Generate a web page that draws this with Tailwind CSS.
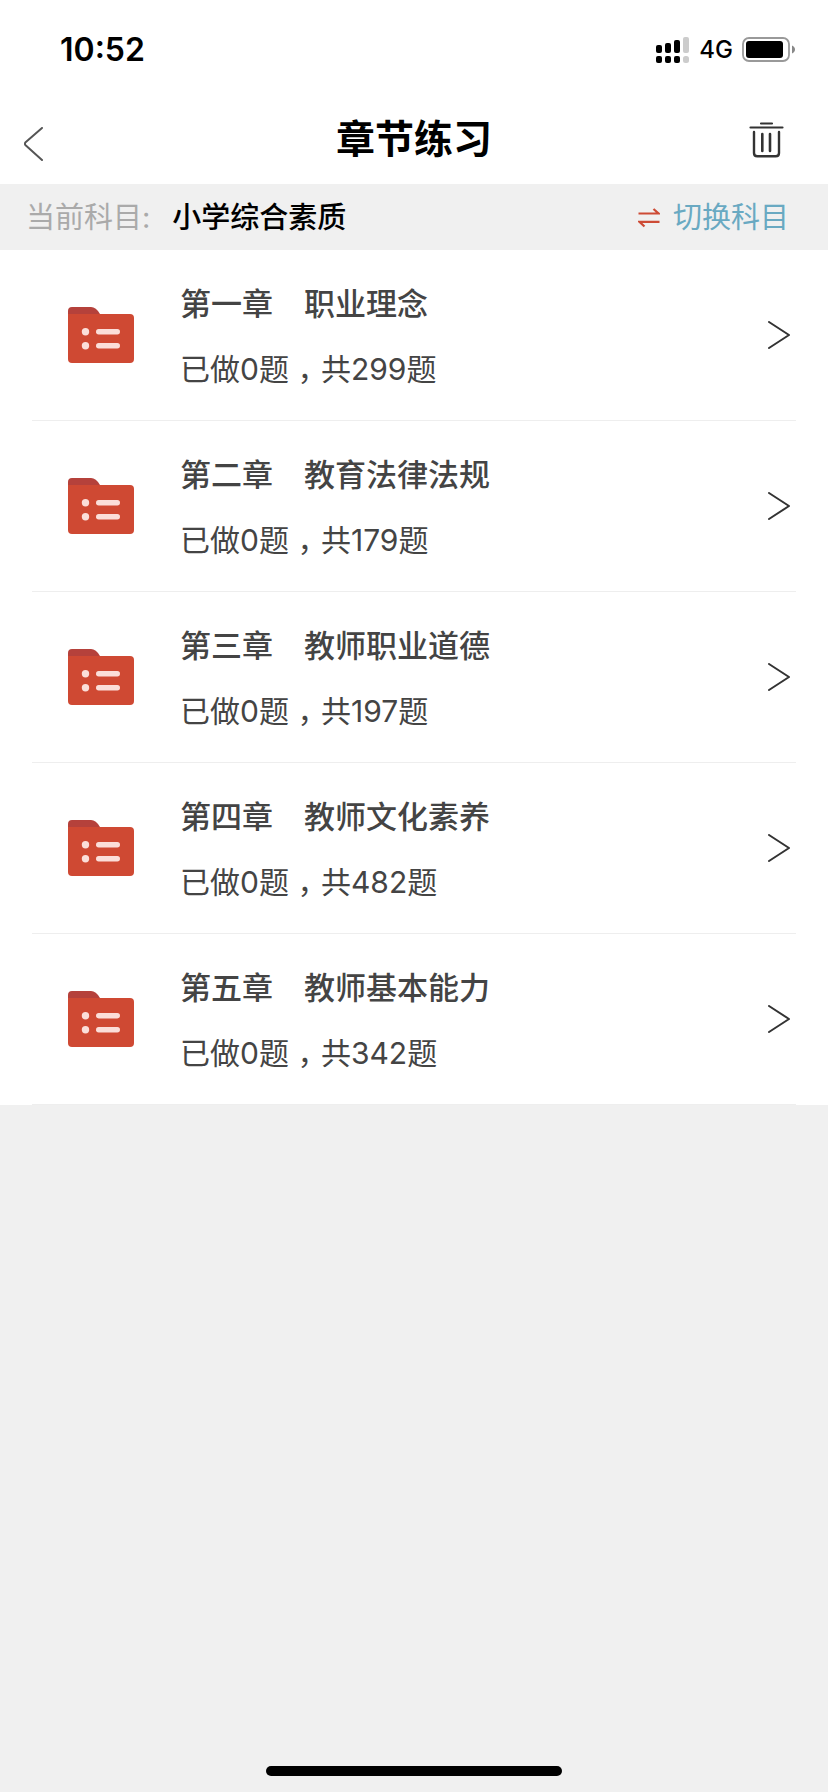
<!DOCTYPE html>
<html lang="zh-CN">
<head>
  <meta charset="UTF-8" />
  <meta name="viewport" content="width=device-width, initial-scale=1.0"/>
  <title>章节练习</title>
  <script src="https://cdn.jsdelivr.net/npm/@tailwindcss/browser@4"></script>
</head>
<body class="bg-[#f0f0f0] font-['Inter','Noto_Sans_CJK_SC',sans-serif] text-[#444]">
  <div class="flex min-h-screen flex-col">

    <!-- 状态栏 -->
    <div class="flex h-[100px] items-center justify-between bg-white pr-[33px] pl-[60px] text-black">
      <span class="text-[32px] font-semibold">10:52</span>
      <div class="flex items-center">
        <svg class="h-[26px] w-[33px]" viewBox="0 0 33 26">
          <rect x="0" y="8" width="6" height="8" rx="2"/>
          <rect x="9" y="6" width="6" height="10" rx="2"/>
          <rect x="18" y="3" width="6" height="13" rx="2"/>
          <rect x="27" y="0" width="6" height="16" rx="2" fill="#ccc"/>
          <rect x="0" y="19" width="6" height="7" rx="2"/>
          <rect x="9" y="19" width="6" height="7" rx="2"/>
          <rect x="18" y="19" width="6" height="7" rx="2"/>
          <rect x="27" y="19" width="6" height="7" rx="2.5" fill="#ccc"/>
        </svg>
        <span class="ml-[10px] text-[24px] font-medium">4G</span>
        <svg class="ml-[9px] h-[26px] w-[53px]" viewBox="0 0 53 26">
          <rect x="1" y="1" width="46" height="23" rx="6" fill="none" stroke="#999" stroke-width="1.8"/>
          <rect x="4" y="4" width="37" height="17" rx="3"/>
          <path d="M50 8.500C54 10 54 15 50 16.500Z" fill="#888"/>
        </svg>
      </div>
    </div>

    <!-- 标题栏 -->
    <header class="grid h-[84px] grid-cols-[1fr_auto_1fr] items-center bg-white px-6 pb-2">
      <button type="button" aria-label="返回" class="justify-self-start pt-3">
        <svg class="h-[34px] w-5" viewBox="0 0 20 34" fill="none" stroke="#555" stroke-width="2" stroke-linecap="round" stroke-linejoin="round">
          <path d="M18 1L1.600 15.200Q.2 16.800 1.600 18.300L18 33"/>
        </svg>
      </button>
      <h1 class="text-[39px] leading-none font-bold text-black">章节练习</h1>
      <button type="button" aria-label="清空" class="justify-self-end pt-1 pr-5">
        <svg class="h-9 w-[35px]" viewBox="0 0 35 36" fill="none" stroke="#333" stroke-width="2.400" stroke-linecap="round">
          <path d="M12 1.500H23M1.500 5.500H33.500" stroke-width="2.200"/>
          <path d="M5 10V31Q5 34.300 8.300 34.300H26.700Q30 34.300 30 31V10"/>
          <path d="M13.300 12V29M21 12V29" stroke-width="2.600"/>
        </svg>
      </button>
    </header>

    <!-- 当前科目 -->
    <div class="flex h-[66px] items-center justify-between pt-[2px] pr-[39px] pl-[26px] text-[29px]">
      <p class="flex gap-[22px]">
        <span class="text-[#aaa]">当前科目:</span>
        <span class="font-medium text-black">小学综合素质</span>
      </p>
      <button type="button" class="flex items-center gap-[13px] text-[#69a9c2]">
        <svg class="h-5 w-[22px]" viewBox="0 0 22 20" fill="none" stroke="#cd4b35" stroke-width="2.200">
          <path d="M.5 5.500H20.500L15.500 1M21.500 13.800H1.500L6.500 18.500"/>
        </svg>
        切换科目
      </button>
    </div>

    <!-- 章节列表 -->
    <ul id="chapter-list" class="bg-white"></ul>

    <!-- 底部横条 -->
    <div class="mx-auto mt-auto mb-4 h-[10px] w-[296px] rounded-full bg-black"></div>
  </div>

  <script>
    const chapters = [
      { no: '第一章', name: '职业理念', done: 0, total: 299 },
      { no: '第二章', name: '教育法律法规', done: 0, total: 179 },
      { no: '第三章', name: '教师职业道德', done: 0, total: 197 },
      { no: '第四章', name: '教师文化素养', done: 0, total: 482 },
      { no: '第五章', name: '教师基本能力', done: 0, total: 342 },
    ];
    const list = document.getElementById('chapter-list');

    chapters.forEach(item => {
      const li = document.createElement('li');
      li.className = "px-8";
      li.innerHTML = `
        <a href="#" class="flex h-[171px] items-center border-b border-[#eee] pr-[6px] pl-9">
          <svg class="h-[57px] w-[66px] shrink-0" viewBox="0 0 66 57">
            <path d="M0 18V4Q0 0 4 0H23Q28 0 32 7L38 18Z" fill="#b5413b"/>
            <path d="M0 7H62Q66 7 66 11V52Q66 56 62 56H4Q0 56 0 52Z" fill="#cf4933"/>
            <g fill="#fbded9">
              <circle cx="17.500" cy="24.700" r="3.700"/>
              <circle cx="17.500" cy="38.700" r="3.700"/>
              <rect x="28" y="22" width="24" height="5.400" rx="2.700"/>
              <rect x="28" y="36" width="24" height="5.400" rx="2.700"/>
            </g>
          </svg>
          <div class="ml-[46px] flex-1 pt-[3px]">
            <h2 class="text-[31px] leading-9 font-medium">${item.no}　${item.name}</h2>
            <p class="mt-[29px] text-[30px] leading-9">已做${item.done}题<span class="inline-block w-8 text-center [font-feature-settings:'halt']">，</span>共${item.total}题</p>
          </div>
          <svg class="h-7 w-[22px] shrink-0" viewBox="0 0 22 28" fill="none" stroke="#333" stroke-width="2" stroke-linecap="round" stroke-linejoin="round">
            <path d="M1 1L21 14L1 27"/>
          </svg>
        </a>
      `;
      list.appendChild(li);
    });
  </script>
</body>
</html>
